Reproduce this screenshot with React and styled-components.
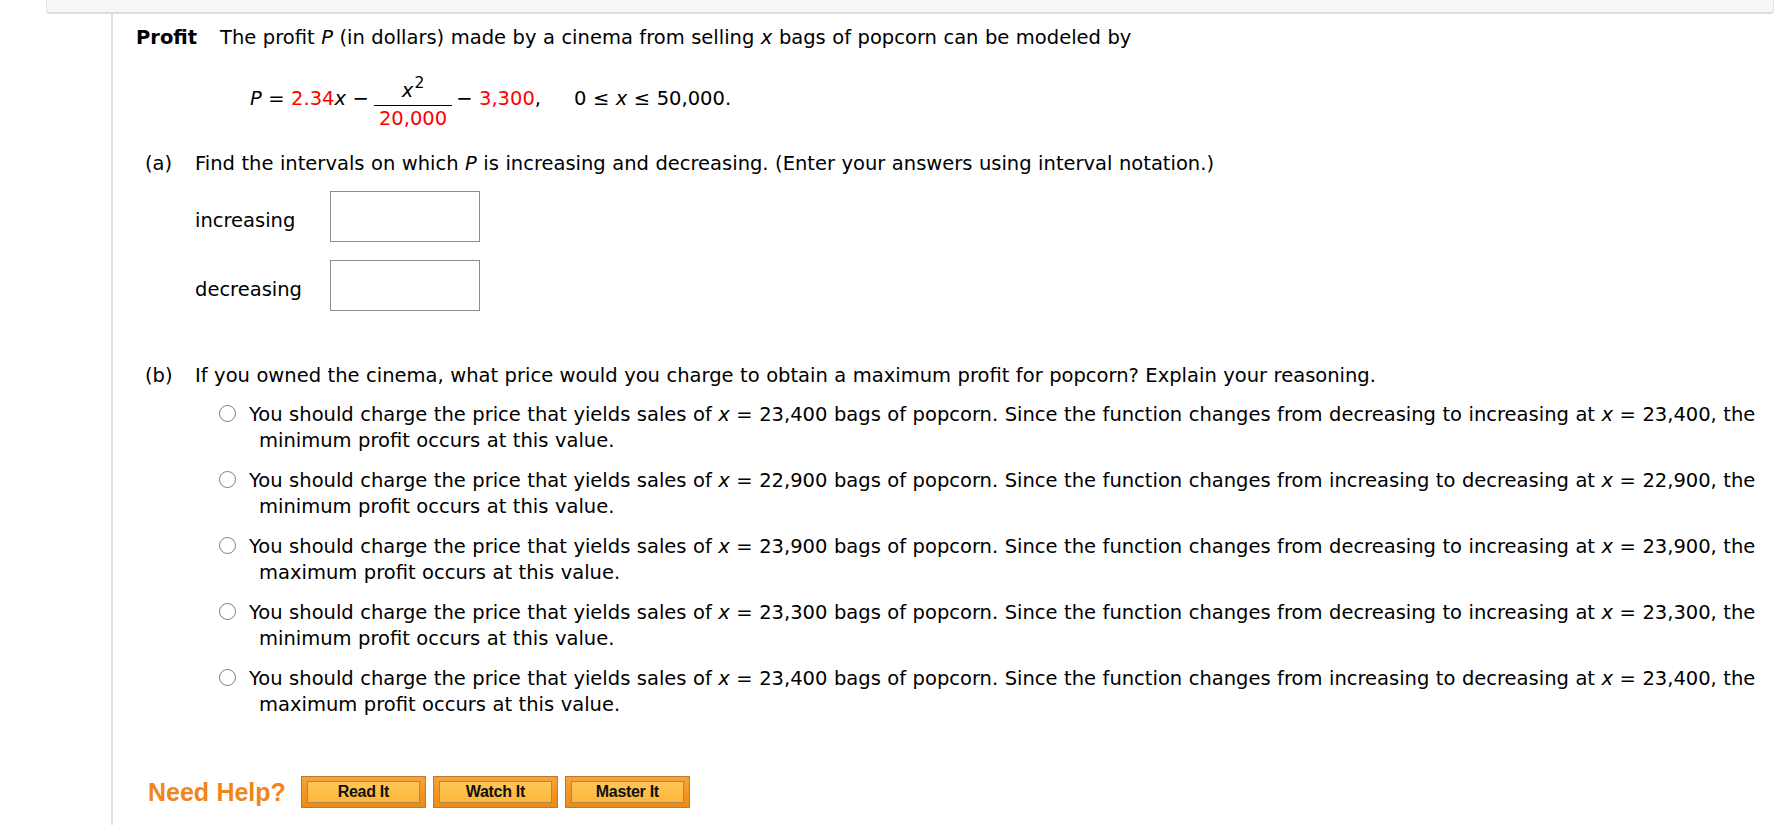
import React from 'react';
import styled, { createGlobalStyle } from 'styled-components';

const textColor = "#000000";
const red = "#ff0000";
const lineColor = "#e0e0e0";
const mainFont = "'DejaVu Sans', Verdana, sans-serif";
const helpFont = "'Liberation Sans', Arial, sans-serif";

const GlobalStyle = createGlobalStyle`
  body {
    margin: 0;
    background: #ffffff;
    font-family: ${mainFont};
    font-size: 19.5px;
    word-spacing: 0.3px;
    color: ${textColor};
  }
`;

const Page = styled.div`
  width: 1774px;
  min-height: 825px;
  overflow: hidden;
`;

const TopBar = styled.div`
  margin-left: 46px;
  height: 12px;
  background: #f6f6f6;
  border-bottom: 2px solid #dedede;
  border-left: 1px solid #e6e6e6;
  border-right: 1px solid #e6e6e6;
  border-radius: 0 0 4px 4px;
`;

const Main = styled.div`
  margin-left: 111px;
  border-left: 2px solid ${lineColor};
  padding: 11px 0 0 23px;
  min-height: 811px;
  box-sizing: border-box;
`;

const Intro = styled.div`
  line-height: 26px;
  white-space: nowrap;
`;

const Title = styled.b`
  margin-right: 23px;
`;

const I = styled.i`
  font-style: italic;
`;

const Red = styled.span`
  color: ${red};
`;

const Formula = styled.div`
  margin-top: 29px;
  padding-left: 114px;
  line-height: 26px;
  white-space: nowrap;
`;

const Fraction = styled.span`
  display: inline-flex;
  flex-direction: column;
  align-items: center;
  vertical-align: 8px;
  margin: 0 4px 0 5px;
`;

const Num = styled.span`
  line-height: 22px;
  padding-bottom: 3px;
`;

const Sup = styled.span`
  font-size: 15.5px;
  line-height: 0;
  vertical-align: 9px;
  margin-left: 1px;
`;

const Den = styled.span`
  line-height: 26px;
  border-top: 1px solid ${textColor};
  padding: 0 5px;
`;

const Range = styled.span`
  margin-left: 33px;
`;

const Part = styled.div`
  display: flex;
  margin-top: ${props => props.gap}px;
`;

const PartLabel = styled.div`
  flex: none;
  width: 59px;
  padding-left: 9px;
  box-sizing: border-box;
  line-height: 26px;
`;

const PartBody = styled.div`
  flex: 1;
  min-width: 0;
`;

const Question = styled.div`
  line-height: 26px;
`;

const AnswerList = styled.div`
  display: flex;
  flex-direction: column;
  gap: 18px;
  margin-top: 14px;
`;

const AnswerRow = styled.label`
  display: flex;
  align-items: center;
`;

const AnswerLabel = styled.span`
  width: 135px;
  line-height: 26px;
  padding-top: 9px;
`;

const AnswerBox = styled.input`
  width: 150px;
  height: 51px;
  box-sizing: border-box;
  border: 1px solid #8c8c8c;
  margin: 0;
  padding: 0 6px;
  font: inherit;
  outline: none;
`;

const OptionList = styled.div`
  display: flex;
  flex-direction: column;
  gap: 14px;
  margin-top: 13px;
`;

const Option = styled.div`
  padding-left: 64px;
  text-indent: -40px;
  line-height: 26px;
  padding-right: 8px;
`;

const Radio = styled.span`
  display: inline-block;
  width: 15px;
  height: 15px;
  border: 1px solid #7c7c7c;
  border-radius: 50%;
  background: #ffffff;
  vertical-align: -1px;
  margin-right: 13px;
`;

const HelpRow = styled.div`
  display: flex;
  align-items: center;
  gap: 7px;
  margin-top: 58px;
  padding-left: 12px;
`;

const HelpText = styled.span`
  font-family: ${helpFont};
  font-weight: bold;
  font-size: 25px;
  line-height: 32px;
  color: #f0861a;
  margin-right: 8px;
`;

const HelpButton = styled.button`
  display: flex;
  width: 125px;
  height: 32px;
  box-sizing: border-box;
  padding: 4px 5px;
  margin: 0;
  border: 1px solid #c0782c;
  background: linear-gradient(#f6a33c, #ec8b18);
  cursor: pointer;
`;

const ButtonFace = styled.span`
  flex: 1;
  display: flex;
  align-items: center;
  justify-content: center;
  border: 1px solid #b98442;
  background: linear-gradient(#fec658, #fbb73c);
  font-family: ${helpFont};
  font-weight: bold;
  font-size: 16px;
  letter-spacing: -0.3px;
  color: #111111;
`;

const options = [
  { x: "23,400", from: "decreasing", to: "increasing", kind: "minimum" },
  { x: "22,900", from: "increasing", to: "decreasing", kind: "minimum" },
  { x: "23,900", from: "decreasing", to: "increasing", kind: "maximum" },
  { x: "23,300", from: "decreasing", to: "increasing", kind: "minimum" },
  { x: "23,400", from: "increasing", to: "decreasing", kind: "maximum" },
];

export default function App() {
  return (
    <Page>
      <GlobalStyle />
      <TopBar />
      <Main>
        <Intro>
          <Title>Profit</Title>
          The profit <I>P</I> (in dollars) made by a cinema from selling <I>x</I> bags of popcorn can be modeled by
        </Intro>

        <Formula>
          <I>P</I> = <Red>2.34</Red><I>x</I> −
          <Fraction>
            <Num><I>x</I><Sup>2</Sup></Num>
            <Den><Red>20,000</Red></Den>
          </Fraction>
          − <Red>3,300</Red>,
          <Range>0 ≤ <I>x</I> ≤ 50,000.</Range>
        </Formula>

        <Part gap={19}>
          <PartLabel>(a)</PartLabel>
          <PartBody>
            <Question>
              Find the intervals on which <I>P</I> is increasing and decreasing. (Enter your answers using interval notation.)
            </Question>
            <AnswerList>
              <AnswerRow>
                <AnswerLabel>increasing</AnswerLabel>
                <AnswerBox type="text" />
              </AnswerRow>
              <AnswerRow>
                <AnswerLabel>decreasing</AnswerLabel>
                <AnswerBox type="text" />
              </AnswerRow>
            </AnswerList>
          </PartBody>
        </Part>

        <Part gap={52}>
          <PartLabel>(b)</PartLabel>
          <PartBody>
            <Question>
              If you owned the cinema, what price would you charge to obtain a maximum profit for popcorn? Explain your reasoning.
            </Question>
            <OptionList>
              {options.map((o, i) => (
                <Option key={i}>
                  <Radio />
                  You should charge the price that yields sales of <I>x</I> = {o.x} bags of popcorn. Since the function changes from {o.from} to {o.to} at <I>x</I> = {o.x}, the {o.kind} profit occurs at this value.
                </Option>
              ))}
            </OptionList>
          </PartBody>
        </Part>

        <HelpRow>
          <HelpText>Need Help?</HelpText>
          <HelpButton><ButtonFace>Read It</ButtonFace></HelpButton>
          <HelpButton><ButtonFace>Watch It</ButtonFace></HelpButton>
          <HelpButton><ButtonFace>Master It</ButtonFace></HelpButton>
        </HelpRow>
      </Main>
    </Page>
  );
}
